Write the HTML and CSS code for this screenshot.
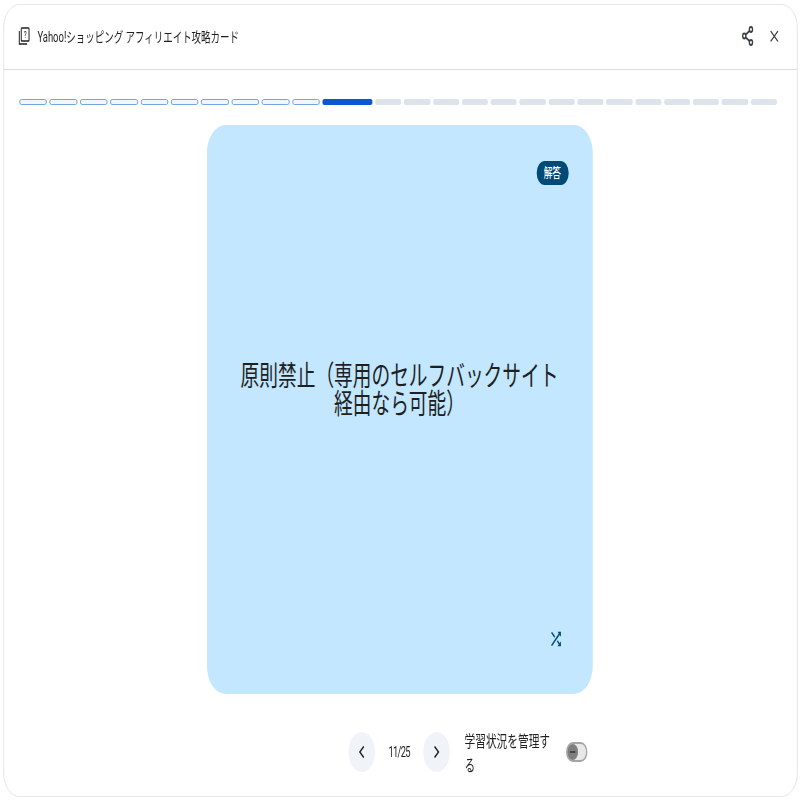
FILE: index.html
```html
<!DOCTYPE html>
<html lang="ja">
<head>
  <meta charset="UTF-8">
  <meta name="viewport" content="width=device-width, initial-scale=1.0">
  <title>Yahoo!ショッピング アフィリエイト攻略カード</title>
  <link rel="stylesheet" href="styles.css">
</head>
<body>
  <div class="viewport">
    <div class="stage">
      <div class="panel">
        <header class="panel-header">
          <svg class="title-icon" viewBox="0 0 24 24" fill="none" stroke="#1f1f1f" stroke-width="1.8">
            <rect x="7" y="2.5" width="14" height="15.5" rx="1"/>
            <path d="M3.5 6v15.5h14"/>
            <text x="14" y="14.5" text-anchor="middle" font-family="Roboto, sans-serif" font-size="11" fill="#1f1f1f" stroke="none">?</text>
          </svg>
          <h1 class="title">Yahoo!ショッピング アフィリエイト攻略カード</h1>
          <button class="icon-btn share-btn" aria-label="共有">
            <svg viewBox="0 0 24 24" fill="none" stroke="#3c4043" stroke-width="2">
              <circle cx="17" cy="5.5" r="2.4"/>
              <circle cx="7" cy="12" r="2.4"/>
              <circle cx="17" cy="18.5" r="2.4"/>
              <path d="M9 10.7l6-3.9M9 13.3l6 3.9"/>
            </svg>
          </button>
          <button class="icon-btn close-btn" aria-label="閉じる">
            <svg viewBox="0 0 24 24" fill="none" stroke="#3c4043" stroke-width="1.7">
              <path d="M6.5 7l11 10.5M17.5 7L6.5 17.5"/>
            </svg>
          </button>
        </header>

        <div class="progress" id="progress"></div>

        <main class="card-area">
          <section class="card">
            <span class="badge">解答</span>
            <p class="answer">原則禁止（専用のセルフバックサイト経由なら可能）</p>
            <svg class="shuffle" viewBox="0 0 24 24" fill="#004a77">
              <path d="M10.6 9.2L5.4 4 4 5.4l5.2 5.2 1.4-1.4zM14.5 4l2 2L4 18.6 5.4 20 18 7.5l2 2V4h-5.5zm.3 9.4l-1.4 1.4 3.1 3.1-2 2.1H20v-5.5l-2 2-3.2-3.1z"/>
            </svg>
          </section>
        </main>

        <footer class="panel-footer">
          <div class="pager">
            <button class="nav-btn" aria-label="前へ">
              <svg viewBox="0 0 24 24" fill="none" stroke="#1f1f1f" stroke-width="1.7"><path d="M15 6.5l-6 5.5 6 5.5"/></svg>
            </button>
            <span class="count">11/25</span>
            <button class="nav-btn" aria-label="次へ">
              <svg viewBox="0 0 24 24" fill="none" stroke="#1f1f1f" stroke-width="1.7"><path d="M9 6.5l6 5.5-6 5.5"/></svg>
            </button>
          </div>
          <div class="status">
            <span class="status-label">学習状況を管理する</span>
            <span class="toggle"><span class="thumb"></span></span>
          </div>
        </footer>
      </div>
    </div>
  </div>

  <script>
    const progress = document.getElementById('progress');
    for (let i = 0; i < 25; i++) {
      const seg = document.createElement('div');
      seg.className = 'seg ' + (i < 10 ? 'done' : i === 10 ? 'current' : 'todo');
      progress.appendChild(seg);
    }
  </script>
</body>
</html>
```

FILE: styles.css
```css
html, body {
  margin: 0;
  padding: 0;
  height: 100%;
  overflow: hidden;
  background: #fff;
}

.viewport {
  width: 801px;
  height: 801px;
  overflow: hidden;
}

/* the whole page is drawn at 1200 wide and squeezed into the window */
.stage {
  width: 1200px;
  height: 801px;
  padding: 4px 5px;
  box-sizing: border-box;
  transform: scaleX(0.6675);
  transform-origin: left top;
  font-family: Roboto, "Noto Sans CJK JP", sans-serif;
  color: #1f1f1f;
}

.panel {
  height: 793px;
  box-sizing: border-box;
  border: 1px solid #e0e0e0;
  border-radius: 24px;
  display: flex;
  flex-direction: column;
}

.panel-header {
  height: 65px;
  box-sizing: border-box;
  flex: none;
  display: flex;
  align-items: center;
  padding: 0 22px 2px 20px;
  border-bottom: 1px solid #dcdcdc;
}

.title-icon {
  width: 20px;
  height: 20px;
  margin-right: 10px;
}

.title {
  flex: 1;
  margin: 0;
  font-size: 14.2px;
  font-weight: 400;
}

.icon-btn {
  width: 24px;
  height: 24px;
  padding: 0;
  margin-left: 16px;
  border: none;
  background: none;
}

.icon-btn svg,
.nav-btn svg {
  display: block;
  width: 24px;
  height: 24px;
}

.progress {
  flex: none;
  display: flex;
  gap: 4px;
  margin: 29px 0 0 23px;
}

.seg {
  flex: none;
  height: 6px;
  box-sizing: border-box;
  border-radius: 3px;
}

.seg.done {
  width: 41.4px;
  border: 1px solid #5f92dc;
  background: #f1f6fd;
}

.seg.current {
  width: 75px;
  background: #0b57d0;
}

.seg.todo {
  width: 39.3px;
  background: #dde3ea;
}

.card-area {
  flex: none;
  display: flex;
  justify-content: center;
  padding: 20px 3px 0 0;
}

.card {
  position: relative;
  width: 578px;
  height: 569px;
  box-sizing: border-box;
  border-radius: 28px;
  background: #c2e7ff;
  display: flex;
  align-items: center;
  justify-content: center;
  padding: 0 44px 37px;
}

.answer {
  margin: 0;
  font-size: 28px;
  line-height: 28px;
  text-align: center;
}

.badge {
  position: absolute;
  top: 36px;
  right: 36px;
  width: 48px;
  height: 24px;
  border-radius: 12px;
  background: #004a77;
  color: #fff;
  font-size: 13px;
  font-weight: 500;
  line-height: 24px;
  text-align: center;
}

.shuffle {
  position: absolute;
  right: 44px;
  bottom: 44px;
  width: 22px;
  height: 22px;
}

.panel-footer {
  flex: 1;
  display: grid;
  grid-template-columns: 1fr auto 1fr;
  align-items: center;
  padding: 14px 4px 0 0;
}

.pager {
  grid-column: 2;
  display: flex;
  align-items: center;
}

.nav-btn {
  width: 40px;
  height: 40px;
  padding: 8px;
  border: none;
  border-radius: 50%;
  background: #f0f4f9;
}

.count {
  width: 72px;
  font-size: 14px;
  letter-spacing: -1px;
  text-align: center;
}

.status {
  grid-column: 3;
  display: flex;
  align-items: center;
  margin: 3px 0 0 22px;
}

.status-label {
  width: 136px;
  font-size: 16px;
  line-height: 24px;
}

.toggle {
  width: 32px;
  height: 20px;
  margin: 0 0 3px 16px;
  box-sizing: border-box;
  border: 2px solid #a3a6a4;
  border-radius: 10px;
  background: #e6e8e9;
  display: flex;
  align-items: center;
}

.thumb {
  width: 16px;
  height: 16px;
  border-radius: 50%;
  background: #7d807e;
  position: relative;
}

.thumb::after {
  content: "";
  position: absolute;
  left: 4px;
  right: 4px;
  top: 7px;
  height: 2px;
  background: #444746;
}
```
